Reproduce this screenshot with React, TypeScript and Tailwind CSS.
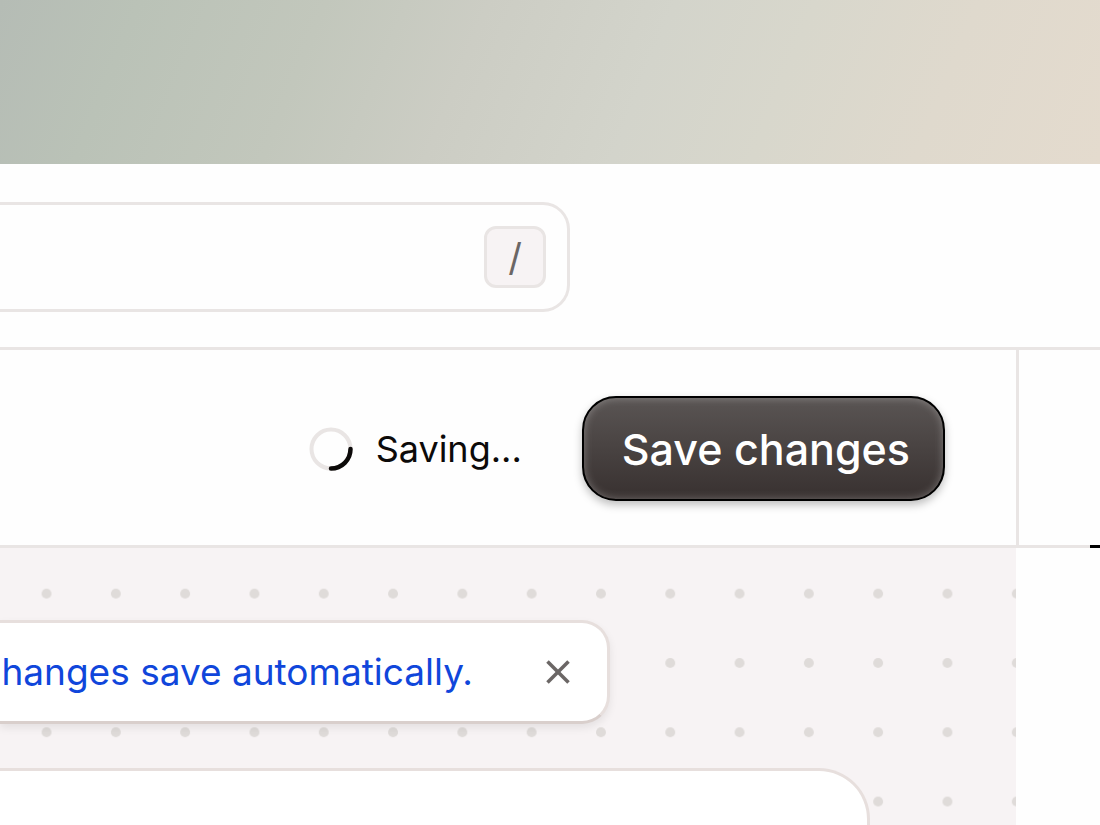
import { X } from "lucide-react";

function Spinner() {
    return (
        <svg className="size-11 shrink-0" viewBox="0 0 44 44" fill="none" aria-hidden="true">
            <circle cx="22" cy="22" r="19.5" stroke="#e9e5e4" strokeWidth="4" />
            <path d="M41.5 22A19.5 19.5 0 0 1 22 41.5" stroke="#0c0a09" strokeWidth="4.5" strokeLinecap="round" />
        </svg>
    );
}

function DotGrid() {
    return (
        <svg className="absolute inset-0 size-full" aria-hidden="true">
            <defs>
                <pattern id="dots" x="11.9" y="11" width="69.3" height="69.3" patternUnits="userSpaceOnUse">
                    <circle cx="34.65" cy="34.65" r="5" fill="#dfdbd9" />
                </pattern>
            </defs>
            <rect width="100%" height="100%" fill="url(#dots)" />
        </svg>
    );
}

function SearchBar() {
    return (
        <header className="border-b-3 border-[#e9e5e4] pt-[38px] pb-[35px]">
            <label className="flex h-[110px] w-full max-w-[570px] items-center rounded-r-[27px] border-3 border-l-0 border-[#e9e5e4] pr-[21px]">
                <input type="search" aria-label="Search" className="h-full min-w-0 flex-1 outline-none" />
                <kbd className="flex size-[62px] items-center justify-center rounded-xl border-3 border-[#e9e5e4] bg-[#f7f3f4] font-[Inter,sans-serif] text-[38px] leading-none text-[#6b6665]">
                    /
                </kbd>
            </label>
        </header>
    );
}

function Toolbar() {
    return (
        <div className="flex h-[198px] items-center justify-end border-b-3 border-[#e9e5e4] pt-[2px] pr-[71px]">
            <div role="status" className="mr-[60px] flex items-center gap-[23px]">
                <Spinner />
                <span className="text-[36px] leading-[48px] text-[#0c0a09]">Saving...</span>
            </div>
            <button
                type="button"
                className="h-[105px] rounded-[34px] border-2 border-black bg-linear-to-b from-[#5a5554] to-[#383130] pr-[33px] pl-[38px] text-[43px] leading-[52px] font-medium text-white shadow-[inset_0_0_8px_rgba(255,255,255,0.3),0_4px_8px_rgba(0,0,0,0.25)]"
            >
                Save changes
            </button>
        </div>
    );
}

function AutosaveNotice() {
    return (
        <div className="flex h-[104px] w-full max-w-[610px] items-center justify-end overflow-hidden rounded-r-[28px] border-3 border-l-0 border-[#e7dfdd] border-b-[#d9cfcc] bg-white pr-[28px] shadow-[0_4px_8px_rgba(0,0,0,0.08)]">
            <p className="text-[37px] leading-[48px] whitespace-nowrap text-[#1046db]">Changes save automatically.</p>
            <button type="button" aria-label="Dismiss" className="ml-16 shrink-0 text-[#6b6665]">
                <X className="size-[42px]" strokeWidth={2} strokeLinecap="butt" />
            </button>
        </div>
    );
}

export default function App() {
    return (
        <div className="flex min-h-screen flex-col overflow-hidden bg-[#fefefe] font-[Inter,sans-serif]">
            <div className="h-[164px] shrink-0 bg-[linear-gradient(112deg,#b5bcb5_0%,#bac2b7_12%,#c2c7bc_28%,#cccdc4_42%,#d3d4cb_58%,#d8d7cc_70%,#dfd9cd_84%,#e4dbce_100%)]" />

            <SearchBar />

            <div className="flex flex-1">
                <main className="flex min-w-0 flex-1 flex-col">
                    <Toolbar />
                    <section className="relative flex-1 overflow-hidden bg-[#f7f3f4]">
                        <DotGrid />
                        <div className="relative pt-[72px]">
                            <AutosaveNotice />
                            <div className="mt-11 h-[57px] w-full max-w-[870px] rounded-tr-[51px] border-3 border-b-0 border-l-0 border-[#e7dfdd] bg-white" />
                        </div>
                    </section>
                </main>

                <aside className="w-[84px] shrink-0">
                    <div className="flex h-[198px] items-end justify-end border-b-3 border-l-3 border-[#e9e5e4]">
                        <div className="-mb-[3px] h-[3px] w-[10px] bg-black" />
                    </div>
                </aside>
            </div>
        </div>
    );
}
